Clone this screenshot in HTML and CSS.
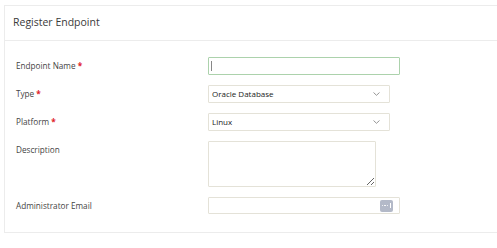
FILE: index.html
```html
<!DOCTYPE html>
<html lang="en">
<head>
  <meta charset="UTF-8" />
  <title>Register Endpoint</title>
  <link rel="stylesheet" href="styles.css">
</head>
<body>
  <section class="panel">
    <header class="panel-head">Register Endpoint</header>
    <form class="form">
      <label class="lbl">Endpoint Name <span class="req">*</span></label>
      <div class="field wide focus"><span class="caret"></span></div>

      <label class="lbl">Type <span class="req">*</span></label>
      <div class="field sel">
        <span>Oracle Database</span>
        <svg class="chev" width="7" height="4" viewBox="0 0 7 4"><path d="M0.5 0.5 L3.5 3.3 L6.5 0.5" fill="none" stroke="#8a8a8a" stroke-width="0.9"/></svg>
      </div>

      <label class="lbl">Platform <span class="req">*</span></label>
      <div class="field sel">
        <span>Linux</span>
        <svg class="chev" width="7" height="4" viewBox="0 0 7 4"><path d="M0.5 0.5 L3.5 3.3 L6.5 0.5" fill="none" stroke="#8a8a8a" stroke-width="0.9"/></svg>
      </div>

      <label class="lbl">Description</label>
      <textarea class="area"></textarea>

      <label class="lbl">Administrator Email</label>
      <div class="field wide email">
        <span class="pick"><i></i><i></i><i></i><b></b></span>
      </div>
    </form>
  </section>
</body>
</html>
```

FILE: styles.css
```css
:root{
  --text:#333333;
  --line:#ececec;
  --input:#e4e2d8;
  --focus:#acd2ac;
}
*{box-sizing:border-box}
body{margin:0;padding:5px 0 0 4px;font-family:'Open Sans',sans-serif;color:var(--text);background:#fff;overflow:hidden}
.panel{border:1px solid var(--line);border-right:none;width:493px;padding-bottom:17px}
.panel-head{height:35px;line-height:33px;padding-left:8px;font-size:10.5px;color:#3a3a3a;border-bottom:1px solid var(--line)}
.form{display:grid;grid-template-columns:203px auto;row-gap:10px;align-items:start;padding-top:16px}
.lbl{font-size:8.2px;line-height:18px;padding-left:11px;color:#444}
.req{color:#e0202a;font-weight:700}
.field{height:18px;width:182px;border:1px solid var(--input);border-radius:1px;font-size:8px;line-height:16px;padding:0 3px;display:flex;align-items:center;justify-content:space-between;color:#222}
.field.wide{width:192px}
.field.focus{border-color:var(--focus)}
.caret{display:block;width:1px;height:10px;background:#888;margin-left:-1px}
.chev{margin-right:6px}
.area{width:168px;height:46px;border:1px solid var(--input);border-radius:1px;margin:0;padding:2px;resize:vertical;display:block}
.field.email{height:17px;justify-content:flex-end;padding-right:6px}
.pick{width:13px;height:12px;background:#b3b9c8;border-radius:2px;display:flex;align-items:center;justify-content:center;gap:1px}
.pick i{width:1.5px;height:1.5px;background:#fff;border-radius:50%}
.pick b{width:1px;height:5px;background:#fff;margin-left:1px}
```
